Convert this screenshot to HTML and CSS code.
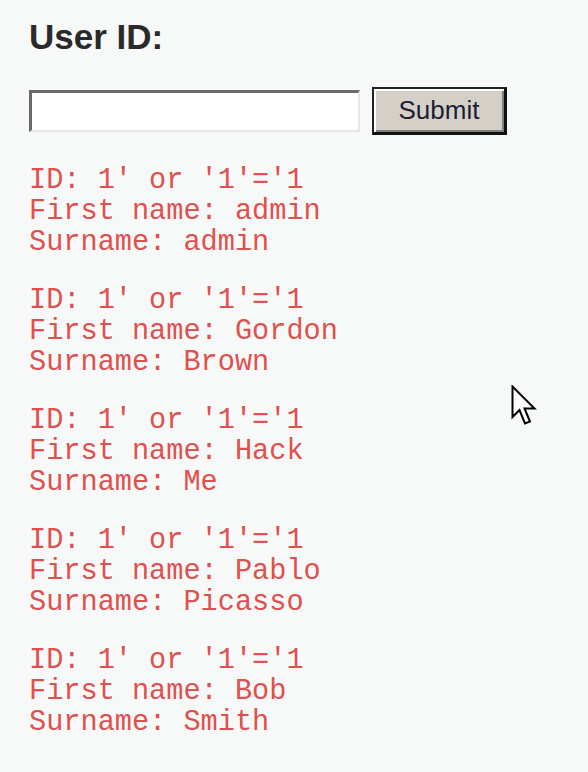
FILE: index.html
```html
<!DOCTYPE html>
<html>
<head>
<meta charset="utf-8">
<link rel="stylesheet" href="styles.css">
</head>
<body>
<div class="page">
  <h1 class="title">User ID:</h1>
  <form class="form">
    <input class="field" type="text">
    <button class="submit" type="button">Submit</button>
  </form>
  <div class="results">
    <pre class="row">ID: 1' or '1'='1
First name: admin
Surname: admin</pre>
    <pre class="row">ID: 1' or '1'='1
First name: Gordon
Surname: Brown</pre>
    <pre class="row">ID: 1' or '1'='1
First name: Hack
Surname: Me</pre>
    <pre class="row">ID: 1' or '1'='1
First name: Pablo
Surname: Picasso</pre>
    <pre class="row">ID: 1' or '1'='1
First name: Bob
Surname: Smith</pre>
  </div>
  <svg class="cursor" width="30" height="46" viewBox="0 0 30 46">
    <path d="M1.5 1.5 L1.5 32 L8.5 25 L14 38.5 L19 36.5 L13.5 23.5 L23.5 23.5 Z" fill="#fff" stroke="#000" stroke-width="2" stroke-linejoin="miter"/>
  </svg>
</div>
</body>
</html>
```
FILE: styles.css
```css
html, body {
  margin: 0;
  padding: 0;
  background: #f7f9f9;
}
.page {
  position: relative;
  width: 588px;
  height: 772px;
  padding: 17px 0 0 29px;
  box-sizing: border-box;
}
.title {
  margin: 0;
  font-family: "Liberation Sans", Arial, sans-serif;
  font-weight: bold;
  font-size: 35px;
  line-height: 40px;
  color: #2a2a2a;
}
.form {
  display: flex;
  align-items: center;
  gap: 12px;
  margin-top: 30px;
}
.field {
  width: 331px;
  height: 42px;
  box-sizing: border-box;
  margin: 0;
  background: #fff;
  border-style: solid;
  border-width: 3px 2px 2px 3px;
  border-color: #6a6a6a #e6e6e6 #e6e6e6 #6a6a6a;
}
.submit {
  width: 135px;
  height: 48px;
  box-sizing: border-box;
  margin: 0;
  padding: 0;
  background: #d4d0c8;
  border-style: solid;
  border-width: 2px 3px 3px 2px;
  border-color: #222 #111 #111 #222;
  box-shadow: inset 2px 2px 0 #fff, inset -2px -2px 0 #808080;
  font-family: "Liberation Sans", Arial, sans-serif;
  font-size: 26px;
  color: #1e1e33;
}
.results {
  margin-top: 30px;
  display: flex;
  flex-direction: column;
  gap: 27px;
}
.row {
  margin: 0;
  font-family: "Liberation Mono", "Courier New", monospace;
  font-size: 28.6px;
  line-height: 31px;
  color: #e0504c;
}
.cursor {
  position: absolute;
  left: 511px;
  top: 385px;
}
```
